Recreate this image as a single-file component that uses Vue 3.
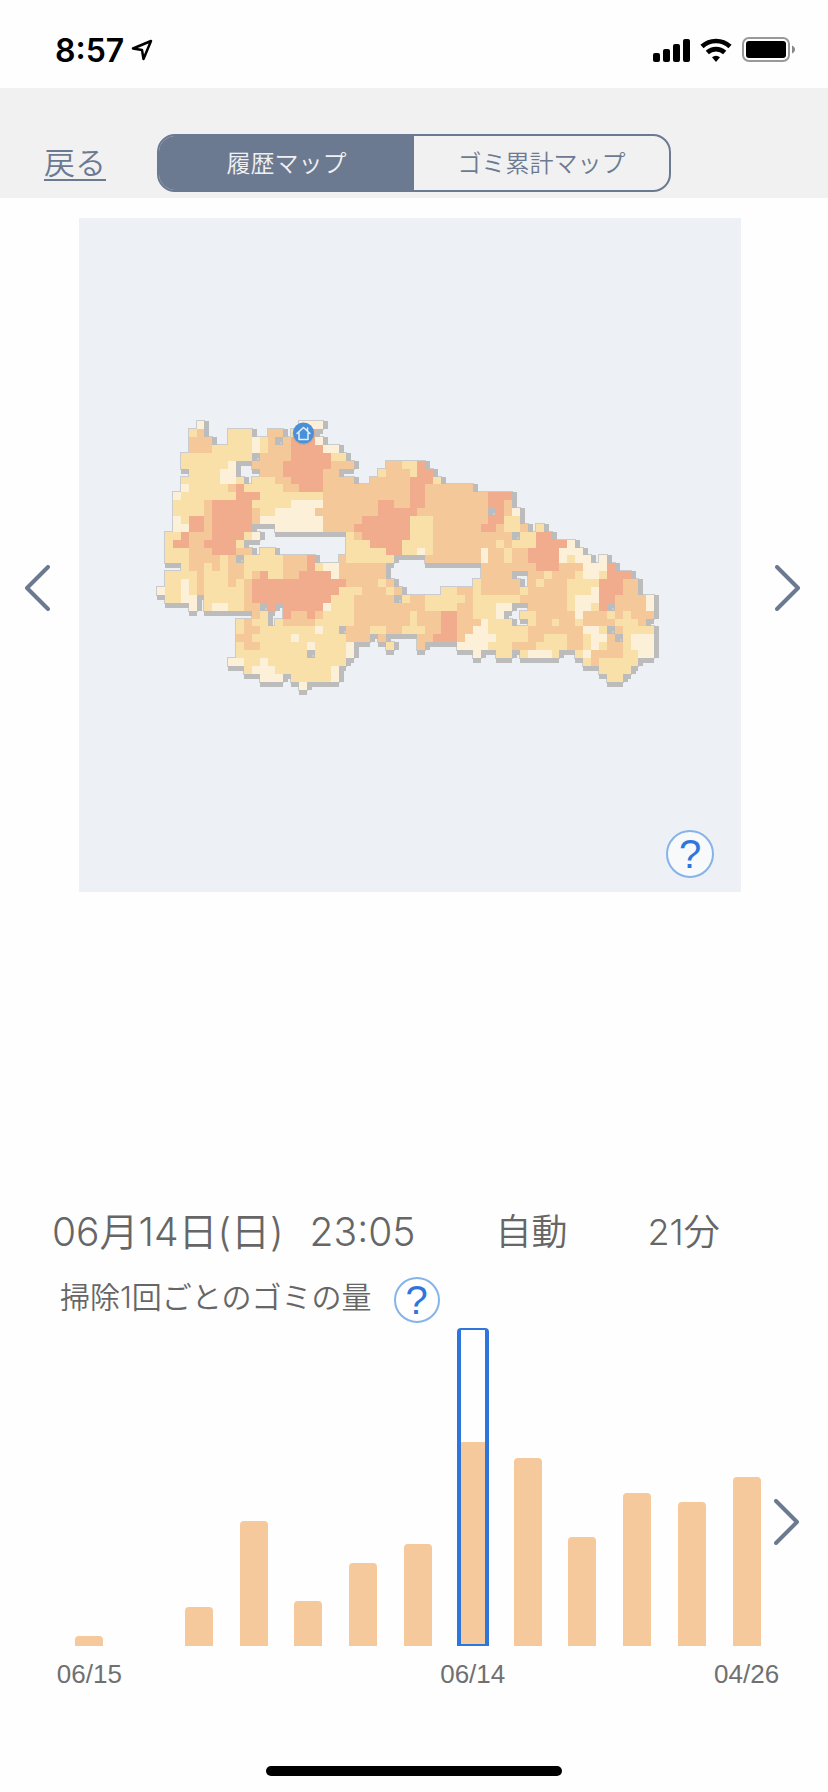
<script setup>
import { ref } from 'vue'

// Run-length rows of the cleaned area: n = outside, a to d = dust level from low to high
const floorRows = [
  '5n1a12n3a',
  '4n1b1c3n3b2n2c1n1b2d',
  '4n3c2n3b1a1b1c1n1c3d1a',
  '4n3c5b1a1b3c4d2a',
  '3n9b1n4c5d2b',
  '3n6b1a2n4c6d3c4n2c2b1d',
  '4n4b2a3n3c5d2c5n1b3c1b2d',
  '3n5b2a1b1n3b2c4d4c2n5c3d1b',
  '3n1a5b1c1d5b2c3d11c2d6c',
  '2n1a7b3d8b11c2d8c3d',
  '2n4b1c5d5b4a7c2d2c2d8c2d1c',
  '2n4b1c5d1c2b5a8c5d9c1n1d1c1a',
  '2n1a1b2d1c5d1c8a5c6d3b7c2d2b',
  '2n2a2d1c5d3n6a4c7d3b6c2d1c2b1c1n1b',
  '1n2b1d3c4d1b1a11n1b1c6d3b10c1n2b2d',
  '1n1b2d2c4d1b13n3b4d4b8c1b1c3b4d1a',
  '1n3b3c3d2c1n2b9n5b2d2b1a1b6c1a2c1b2c4d3a',
  '1n3b4c1b1c1n5b3c1d3n1c6b4n7c1a2c1b2c4d1a1b2a1n1a',
  '3n1b2c1b1c1b2c5b3c1d1b2a6c12n7c3d3c3a1d',
  '1n4b1c3b2c1b1c1d2b2c4d1a6c12n4c2n2c1b3c1b2a1b3d',
  '1n2b1a1b1c3b1c1b1c12d4c1b1c10n1b5c1n1c1b3c4b3d2c',
  '1a2b1a1b1c5b1c11d3b3c1b1c5n2b2c1b5c1b5c3b1a3d2c',
  '1n2b2a1n5b1c10d3b5c1n1b2c5b1c6b6c1b3a2d4c1a',
  '4n1a1n1b2a2b2c1n1d1n5d1a3b9c4b2c3b2a2n5c1b2a1b1d1n4c1a',
  '12n1c1b2n1d2c1d1c4b7c1b3c2d2c3b1a2n2b5c1a3c1b1c1b3c',
  '10n1b1c2b1n1b4c5b7c1b3c2d3c1a3b2n1b2c1b2c1b4c3b1c',
  '10n1b2c7b1a2b1n3c2b2c3b2c2d2c2a5b7c2a1b1n1c4b',
  '10n2c5b1a6b3c1n1c4n2c3d1c4a4b2c3b2c1b2a1c1n1b3a',
  '10n1b2c6b1a4b1a4n1b3n1c4n4a3b3c4b2c1b1a1b2c1b3a',
  '10n9b1n4b1a15n1a2n2b1n1b3a1b2n1b1a4c2b2a',
  '9n2a2b1a10b30n1b1c5b',
  '11n1b3a7b1a33n4b',
  '13n3a1n5b1a34n2b',
  '18n1a',
]
const pitch = 7.89
const edgeX = (c) => Math.round(78.1 + c * pitch)
const edgeY = (r) => Math.round(203.3 + r * pitch)

const grid = floorRows.map((row) =>
  [...row.matchAll(/(\d+)([a-dn])/g)].map(([, count, level]) => level.repeat(Number(count))).join(''),
)
const isFloor = (r, c) => (grid[r]?.[c] ?? 'n') !== 'n'

const cells = []
const obstacles = []
grid.forEach((row, r) => {
  for (let c = 0; c < row.length; c++) {
    const x = edgeX(c)
    const y = edgeY(r)
    const cell = { x, y, w: edgeX(c + 1) - x, h: edgeY(r + 1) - y, level: row[c] }
    if (isFloor(r, c)) {
      cells.push(cell)
    } else if (isFloor(r - 1, c) && isFloor(r + 1, c) && isFloor(r, c - 1) && isFloor(r, c + 1)) {
      obstacles.push(cell)
    }
  }
})
const rectPath = (x, y, w, h) => `M${x} ${y}h${w}v${h}h${-w}z`
const outline = cells.map((k) => rectPath(k.x - 1, k.y - 1, k.w + 2, k.h + 2)).join('')
const walls = cells
  .map((k) => rectPath(k.x, k.y, k.w + 5, k.h) + rectPath(k.x, k.y, k.w, k.h + 5))
  .join('')
const blocks = obstacles.map((k) => rectPath(k.x, k.y, k.w, k.h)).join('')
const glints = obstacles.map((k) => rectPath(k.x + 5, k.y + 5, 2, 2)).join('')
const floors = ['a', 'b', 'c', 'd'].map((level) => ({
  level,
  d: cells.filter((k) => k.level === level).map((k) => rectPath(k.x, k.y, k.w, k.h)).join(''),
}))

const tabs = ['履歴マップ', 'ゴミ累計マップ']
const activeTab = ref(0)

const runs = [
  { amount: 10, label: '06/15' },
  { amount: 0 },
  { amount: 39 },
  { amount: 125 },
  { amount: 45 },
  { amount: 83 },
  { amount: 102 },
  { amount: 204, label: '06/14' },
  { amount: 188 },
  { amount: 109 },
  { amount: 153 },
  { amount: 144 },
  { amount: 169, label: '04/26' },
]
const selected = ref(7)
</script>

<template>
  <div class="page">
    <div class="status">
      <div class="clock">
        <span>8:57</span>
        <svg width="22" height="22" viewBox="0 0 22 22" aria-hidden="true">
          <path d="M2 9.500 20 2 12.500 20 11 11z" fill="none" stroke="#000" stroke-width="2.500" stroke-linejoin="round" />
        </svg>
      </div>
      <div class="signals">
        <svg width="37" height="24" viewBox="0 0 37 24" aria-hidden="true">
          <rect x="0" y="15" width="7" height="9" rx="2" />
          <rect x="10" y="11" width="7" height="13" rx="2" />
          <rect x="20" y="6" width="7" height="18" rx="2" />
          <rect x="30" y="1" width="7" height="23" rx="2" />
        </svg>
        <svg width="32" height="24" viewBox="0 0 32 24" aria-hidden="true">
          <path d="M2 8.500a20.500 20.500 0 0 1 28 0" fill="none" stroke="#000" stroke-width="4.600" />
          <path d="M7.300 14.500a13 13 0 0 1 17.400 0" fill="none" stroke="#000" stroke-width="4.600" />
          <path d="M12 19.200a6 6 0 0 1 8 0L16 24z" />
        </svg>
        <svg width="54" height="26" viewBox="0 0 54 26" aria-hidden="true">
          <rect x="1" y="1" width="46" height="23" rx="6" fill="none" stroke="#999" stroke-width="2" />
          <rect x="4" y="4" width="40" height="17" rx="3" />
          <path d="M50 8.500c4 1.500 4 6.500 0 8z" fill="#888" />
        </svg>
      </div>
    </div>

    <header class="header">
      <a class="back" href="#">戻る</a>
      <div class="tabs">
        <button
          v-for="(tab, i) in tabs"
          :key="tab"
          type="button"
          class="tab"
          :class="{ active: activeTab === i }"
          :aria-pressed="activeTab === i"
          @click="activeTab = i"
        >{{ tab }}</button>
      </div>
    </header>

    <main>
      <section class="map-row">
        <button type="button" class="arrow prev" aria-label="前へ">
          <svg width="26" height="46" viewBox="0 0 26 46"><path d="M24 2 3 23l21 21" /></svg>
        </button>
        <div class="map">
          <svg class="map-art" viewBox="0 0 662 674" role="img" aria-label="ゴミの量のマップ">
            <g shape-rendering="crispEdges">
              <path :d="outline" fill="#c9cbcd" />
              <path :d="walls" fill="#bcbcbc" />
              <path :d="blocks" fill="#bcbcbc" />
              <path :d="glints" fill="#cbcccd" />
              <path v-for="f in floors" :key="f.level" :d="f.d" :class="'level-' + f.level" />
            </g>
            <circle cx="224.500" cy="216" r="11" fill="#999" opacity="0.4" />
            <circle cx="224.500" cy="215" r="10.500" fill="#4a90d9" />
            <path
              d="M218 215.500 224.500 209.500l6.500 6M220 215v6.500h9V215M228.500 210v2.500"
              fill="none" stroke="#e3effb" stroke-width="1.500" stroke-linecap="round" stroke-linejoin="round"
            />
          </svg>
          <button type="button" class="help map-help" aria-label="マップのヘルプ">?</button>
        </div>
        <button type="button" class="arrow next" aria-label="次へ">
          <svg width="26" height="46" viewBox="0 0 26 46"><path d="M2 2l21 21L2 44" /></svg>
        </button>
      </section>

      <section class="info">
        <span class="date">06月14日(日)</span>
        <span class="time">23:05</span>
        <span class="mode">自動</span>
        <span class="length">21分</span>
      </section>

      <section class="caption">
        <h2>掃除1回ごとのゴミの量</h2>
        <button type="button" class="help" aria-label="ゴミの量のヘルプ">?</button>
      </section>

      <section class="chart">
        <div class="bars">
          <div v-for="(run, i) in runs" :key="i" class="slot">
            <button
              type="button"
              class="track"
              :class="{ selected: selected === i }"
              :aria-label="run.label || '掃除 ' + (i + 1)"
              @click="selected = i"
            >
              <span class="bar" :style="{ height: (run.amount / 318) * 100 + '%' }"></span>
            </button>
            <span class="tick">{{ run.label }}</span>
          </div>
        </div>
        <button type="button" class="arrow more" aria-label="次の履歴">
          <svg width="26" height="46" viewBox="0 0 26 46"><path d="M2 2l21 21L2 44" /></svg>
        </button>
      </section>
    </main>

    <div class="home"></div>
  </div>
</template>

<style>
body {
  background: #fefefe;
}
</style>

<style scoped>
.page {
  display: flex;
  flex-direction: column;
  min-height: 100vh;
  box-sizing: border-box;
  padding-bottom: 16px;
  overflow-x: hidden;
  color: #666;
  font-family: Inter, "Noto Sans CJK JP", sans-serif;
  font-weight: 350;
}
button {
  margin: 0;
  padding: 0;
  border: 0;
  background: none;
  font: inherit;
  color: inherit;
  cursor: pointer;
}
.status {
  display: flex;
  justify-content: space-between;
  align-items: center;
  height: 88px;
  box-sizing: border-box;
  padding: 12px 32px 0 55px;
  color: #000;
}
.clock {
  display: flex;
  align-items: center;
  gap: 7px;
  font-size: 32px;
  font-weight: 600;
}
.signals {
  display: flex;
  align-items: center;
  gap: 10px;
}
.header {
  display: flex;
  align-items: center;
  padding: 46px 157px 6px 44px;
  background: #f1f1f1;
  font-family: "Noto Sans CJK JP", sans-serif;
}
.back {
  flex: 0 0 113px;
  padding-bottom: 4px;
  color: #6c7a91;
  font-size: 31px;
  line-height: 46px;
  text-decoration-thickness: 2px;
  text-underline-offset: 5px;
}
.tabs {
  display: flex;
  flex: 1;
  height: 58px;
  box-sizing: border-box;
  border: 2px solid #6c7a91;
  border-radius: 18px;
  overflow: hidden;
}
.tab {
  flex: 1;
  padding-bottom: 2px;
  color: #6c7a91;
  font-size: 24px;
  line-height: 52px;
}
.tab.active {
  background: #6c7a91;
  color: #f1f1f1;
}
.map-row {
  display: flex;
  padding-top: 20px;
}
.arrow {
  display: flex;
  align-items: center;
}
.arrow svg {
  fill: none;
  stroke: #6c7a91;
  stroke-width: 4;
  stroke-linecap: round;
  stroke-linejoin: round;
}
.prev,
.next {
  height: 604px;
  margin-top: 68px;
}
.prev {
  flex: 0 0 79px;
  padding-left: 24px;
}
.next {
  flex: 0 0 87px;
  padding-left: 34px;
}
.map {
  position: relative;
  flex: 1;
  background: #edf1f6;
}
.map-art {
  display: block;
  width: 100%;
}
.level-a { fill: #fdf0d9; }
.level-b { fill: #f9e0a8; }
.level-c { fill: #f5c89a; }
.level-d { fill: #f0ac8d; }
.help {
  width: 46px;
  height: 46px;
  box-sizing: border-box;
  border: 2px solid #85b3ea;
  border-radius: 50%;
  background: rgba(255, 255, 255, 0.6);
  color: #2f76dc;
  font-family: "Liberation Sans", Arial, sans-serif;
  font-size: 40px;
  font-weight: 400;
  line-height: 42px;
}
.map-help {
  position: absolute;
  right: 27px;
  bottom: 14px;
  width: 48px;
  height: 48px;
  line-height: 44px;
}
.info {
  display: flex;
  align-items: center;
  margin-top: 312px;
  padding-left: 52px;
  font-size: 39px;
  line-height: 56px;
  white-space: nowrap;
}
.time {
  margin-left: 26px;
}
.mode,
.length {
  margin-left: 80px;
  font-size: 36px;
}
.caption {
  display: flex;
  align-items: center;
  gap: 22px;
  margin-top: 16px;
  padding-left: 60px;
}
.caption h2 {
  margin: 0;
  padding-bottom: 6px;
  font-size: 30px;
  font-weight: 350;
  line-height: 42px;
}
.caption .help {
  margin: 1px 0;
}
.chart {
  display: flex;
  height: 388px;
  margin-top: 4px;
  padding-left: 62px;
}
.bars {
  display: flex;
  flex: 1;
}
.slot {
  display: flex;
  flex: 1 1 0;
  min-width: 0;
  flex-direction: column;
  align-items: center;
}
.track {
  position: relative;
  display: flex;
  align-items: flex-end;
  width: 28px;
  height: 318px;
}
.bar {
  width: 100%;
  border-radius: 4px 4px 0 0;
  background: #f5c99b;
}
.track.selected::after {
  content: "";
  position: absolute;
  inset: 0 -2px;
  border: solid #2f76dc;
  border-width: 2px 4px;
  border-radius: 4px 4px 0 0;
}
.tick {
  margin-top: 12px;
  color: #707070;
  font-family: "Liberation Sans", Arial, sans-serif;
  font-size: 26px;
  font-weight: 400;
  line-height: 32px;
  white-space: nowrap;
}
.more {
  flex: 0 0 54px;
}
.home {
  width: 296px;
  height: 10px;
  margin: auto auto 0;
  border-radius: 5px;
  background: #000;
}
</style>
